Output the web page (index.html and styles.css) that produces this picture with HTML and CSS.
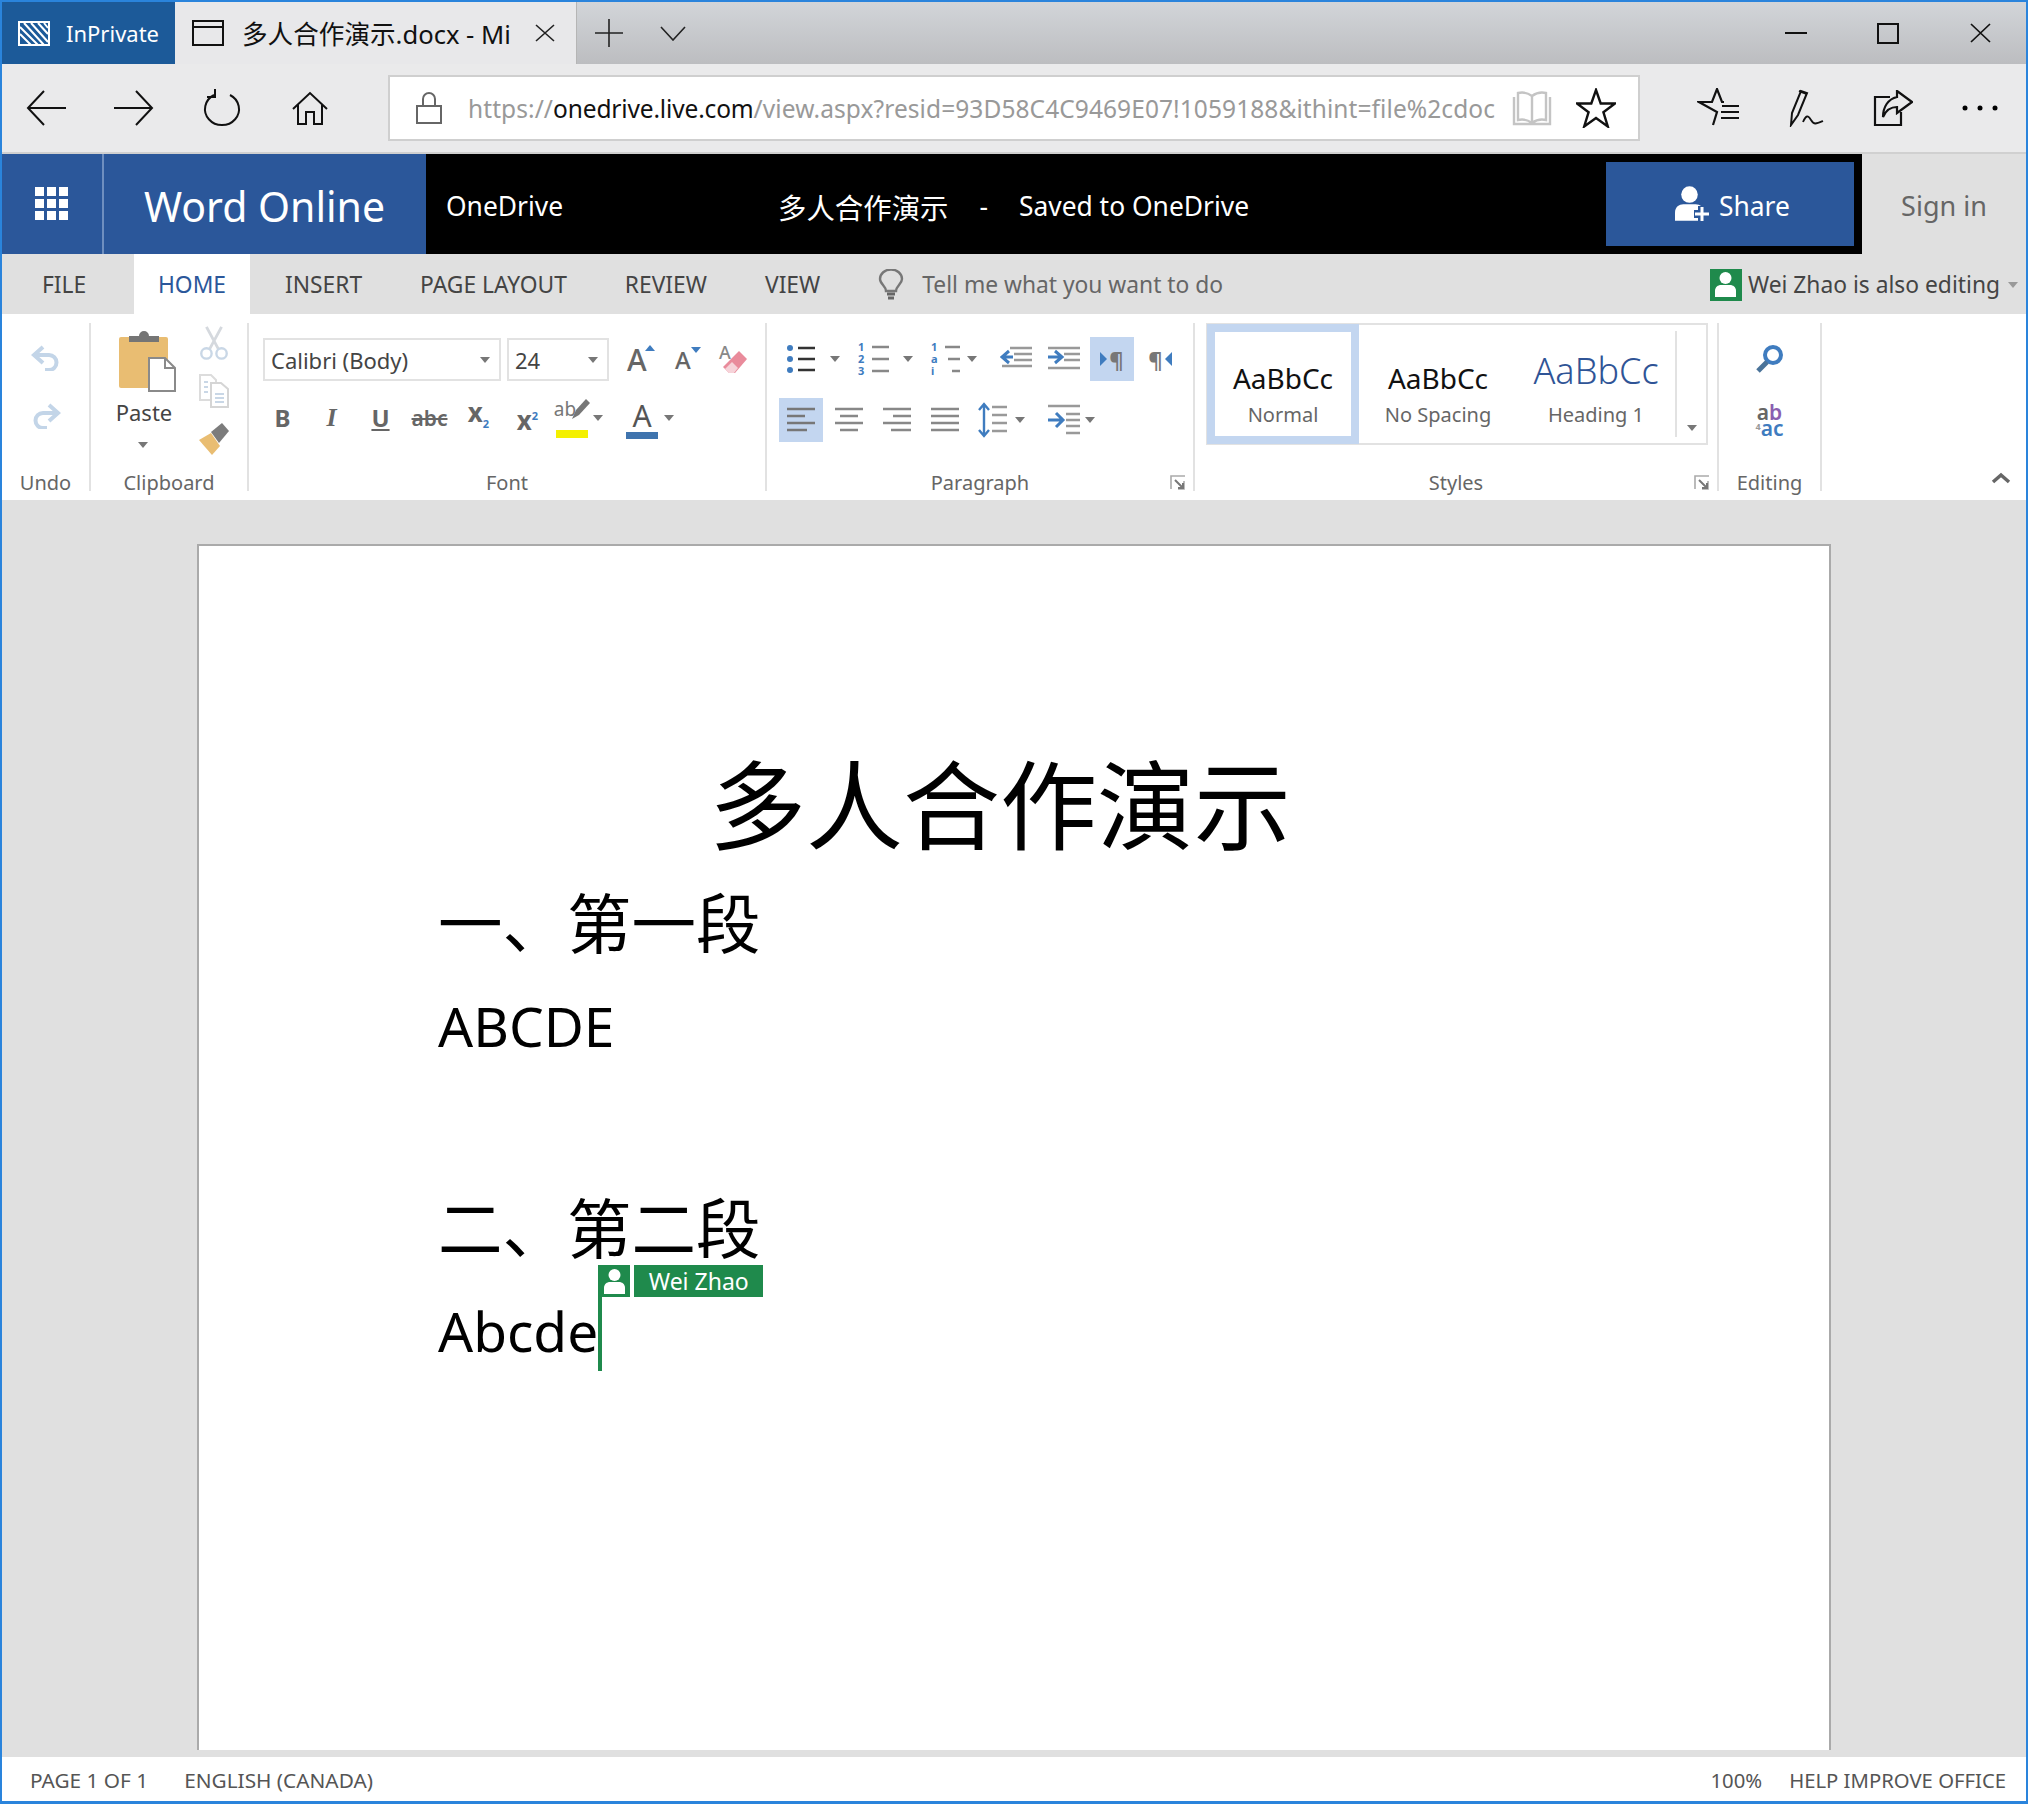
FILE: index.html
```html
<!DOCTYPE html>
<html lang="zh">
<head>
  <meta charset="UTF-8" />
  <title>多人合作演示.docx - Microsoft Word Online</title>
  <link rel="stylesheet" href="styles.css">
</head>
<body>
  <svg class="sprites" width="0" height="0">
    <symbol id="person" viewBox="0 0 21 25">
      <circle cx="10.500" cy="6" r="6" fill="#fff"/>
      <path d="M0 25v-6c0-4 3-6 6-6h9c3 0 6 2 6 6v6z" fill="#fff"/>
    </symbol>
    <symbol id="launcher" viewBox="0 0 16 16">
      <path d="M1 14V1h14M14 6v8H8" fill="none" stroke="#aaa" stroke-width="1.6"/>
      <path d="M5 5l8 8M13 8v5H8" fill="none" stroke="#777" stroke-width="2"/>
    </symbol>
  </svg>

  <div class="window">
    <!-- browser tabs -->
    <div class="tabbar">
      <div class="inprivate">
        <svg width="32" height="25" viewBox="0 0 32 25"><rect x="1" y="1" width="30" height="23" fill="none" stroke="#fff" stroke-width="2"/><path d="M2 6l18 18M2 13l11 11M6 2l20 22M13 2l17 19M20 2l10 11M26 2l4 5" stroke="#fff" stroke-width="2"/></svg>
        <span>InPrivate</span>
      </div>
      <div class="tab">
        <svg width="32" height="26" viewBox="0 0 32 26"><path d="M1 1h30v24H1zM1 7h30" fill="none" stroke="#111" stroke-width="2"/></svg>
        <span class="tab-title">多人合作演示.docx - Mi</span>
        <svg class="tab-close" width="20" height="18" viewBox="0 0 20 18"><path d="M1 1l18 16M19 1L1 17" stroke="#222" stroke-width="1.6"/></svg>
      </div>
      <div class="tab-add"><svg width="28" height="28" viewBox="0 0 28 28"><path d="M14 0v28M0 14h28" stroke="#222" stroke-width="1.6"/></svg></div>
      <div class="tab-more"><svg width="26" height="15" viewBox="0 0 26 15"><path d="M1 1l12 13L25 1" fill="none" stroke="#222" stroke-width="1.6"/></svg></div>
      <div class="win-controls">
        <div class="win-btn"><svg width="22" height="2"><rect width="22" height="2" fill="#111"/></svg></div>
        <div class="win-btn"><svg width="22" height="21" viewBox="0 0 22 21"><rect x="1" y="1" width="20" height="19" fill="none" stroke="#111" stroke-width="2"/></svg></div>
        <div class="win-btn"><svg width="21" height="20" viewBox="0 0 21 20"><path d="M1 1l19 18M20 1L1 19" stroke="#111" stroke-width="1.7"/></svg></div>
      </div>
    </div>

    <!-- browser toolbar -->
    <div class="toolbar">
      <div class="nav-btn"><svg width="40" height="36" viewBox="0 0 40 36"><path d="M18 1L2 18l16 17M2 18h38" fill="none" stroke="#111" stroke-width="2"/></svg></div>
      <div class="nav-btn"><svg width="40" height="36" viewBox="0 0 40 36"><path d="M22 1l16 17-16 17M38 18H0" fill="none" stroke="#111" stroke-width="2"/></svg></div>
      <div class="nav-btn"><svg width="40" height="38" viewBox="0 0 40 38"><path d="M12 6a17 16 0 1 0 16 0M13 0v8H5" fill="none" stroke="#111" stroke-width="2"/></svg></div>
      <div class="nav-btn"><svg width="36" height="34" viewBox="0 0 36 34"><path d="M1 18L18 2l17 16M6 14v19h8V21h8v12h8V14" fill="none" stroke="#111" stroke-width="2"/></svg></div>
      <div class="address">
        <svg class="lock" width="26" height="32" viewBox="0 0 26 32"><path d="M7 14V7a6 6 0 0 1 12 0v7" fill="none" stroke="#666" stroke-width="2"/><rect x="1" y="14" width="24" height="17" fill="none" stroke="#666" stroke-width="2"/></svg>
        <div class="url"><span class="url-dim">https://</span><span class="url-host">onedrive.live.com</span><span class="url-dim">/view.aspx?resid=93D58C4C9469E07!1059188&amp;ithint=file%2cdocx</span></div>
        <svg class="reader" width="40" height="36" viewBox="0 0 40 36"><path d="M20 6C16 3 10 2 6 3v27c4-1 10 0 14 3 4-3 10-4 14-3V3c-4-1-10 0-14 3zM20 6v27M2 7v27h36V7" fill="none" stroke="#c4c4c4" stroke-width="2.4"/></svg>
        <svg class="star" width="40" height="40" viewBox="0 0 40 40"><path d="M20 2l4.700 13.500H39l-11.600 8.700 4.400 14.300L20 30l-11.800 8.500 4.400-14.300L1 15.500h14.300z" fill="none" stroke="#111" stroke-width="2.400"/></svg>
      </div>
      <div class="hub">
        <div class="hub-btn"><svg width="44" height="40" viewBox="0 0 44 40"><path d="M16 37l4-13L2 14h13l5-13 5 13h2M20 24l-4 13" fill="none" stroke="#111" stroke-width="2.200"/><path d="M25 18h17M24 24h18M24 30h18" stroke="#111" stroke-width="2.200"/></svg></div>
        <div class="hub-btn"><svg width="36" height="38" viewBox="0 0 36 38"><path d="M3 36l1-12L13 2l6 2-9 22z M11 2l8 3" fill="none" stroke="#111" stroke-width="2"/><path d="M15 33c3-7 5-7 8-2s5 4 12 1" fill="none" stroke="#111" stroke-width="1.800"/></svg></div>
        <div class="hub-btn"><svg width="40" height="36" viewBox="0 0 40 36"><path d="M17 7H2v28h26V22" fill="none" stroke="#111" stroke-width="2.200"/><path d="M24 1l15 11-15 11v-6c-7 0-11 3-14 10 0-10 5-18 14-20z" fill="none" stroke="#111" stroke-width="2.200"/></svg></div>
        <div class="hub-btn"><svg width="36" height="6" viewBox="0 0 36 6"><circle cx="3" cy="3" r="2.500"/><circle cx="18" cy="3" r="2.500"/><circle cx="33" cy="3" r="2.500"/></svg></div>
      </div>
    </div>

    <!-- word header -->
    <div class="appbar">
      <div class="waffle">
        <svg width="34" height="34" viewBox="0 0 34 34" fill="#fff"><rect width="9" height="9"/><rect x="12" width="9" height="9"/><rect x="24" width="9" height="9"/><rect y="12" width="9" height="9"/><rect x="12" y="12" width="9" height="9"/><rect x="24" y="12" width="9" height="9"/><rect y="24" width="9" height="9"/><rect x="12" y="24" width="9" height="9"/><rect x="24" y="24" width="9" height="9"/></svg>
      </div>
      <div class="brand">Word Online</div>
      <div class="appbar-main">
        <span class="crumb">OneDrive</span>
        <span class="doc-name">多人合作演示</span>
        <span class="doc-dash">-</span>
        <span class="doc-state">Saved to OneDrive</span>
        <div class="share">
          <svg width="36" height="37" viewBox="0 0 36 37"><use href="#person" width="29" height="35"/><path d="M27 20v16M19 28h16" stroke="#2b579a" stroke-width="8"/><path d="M27 21v14M20 28h14" stroke="#fff" stroke-width="3"/></svg>
          <span>Share</span>
        </div>
      </div>
      <div class="signin">Sign in</div>
    </div>

    <!-- ribbon tabs -->
    <div class="ribbon-tabs">
      <div class="rtab rtab-file">FILE</div>
      <div class="rtab rtab-active">HOME</div>
      <div class="rtab">INSERT</div>
      <div class="rtab">PAGE LAYOUT</div>
      <div class="rtab">REVIEW</div>
      <div class="rtab">VIEW</div>
      <div class="tell">
        <svg width="26" height="32" viewBox="0 0 26 32"><path d="M8 22c0-5-6-7-6-12a11 9.500 0 0 1 22 0c0 5-6 7-6 12z" fill="none" stroke="#777" stroke-width="2.400"/><path d="M9 25h8M10 29h6" stroke="#666" stroke-width="3"/></svg>
        <span>Tell me what you want to do</span>
      </div>
      <div class="editing-with">
        <div class="avatar"><svg width="21" height="25"><use href="#person" width="21" height="25"/></svg></div>
        <span>Wei Zhao is also editing</span>
        <i class="arr arr-light"></i>
      </div>
    </div>

    <!-- ribbon -->
    <div class="ribbon">
      <div class="group group-undo">
        <div class="undo-body">
          <svg width="30" height="26" viewBox="0 0 30 26"><path d="M12 2L3 10l9 8M3 10h15a7 7 0 0 1 0 15h-4" fill="none" stroke="#c3d5e8" stroke-width="4"/></svg>
          <svg width="30" height="26" viewBox="0 0 30 26"><path d="M18 2l9 8-9 8M27 10H12a7 7 0 0 0 0 15h4" fill="none" stroke="#c3d5e8" stroke-width="4"/></svg>
        </div>
        <div class="group-label">Undo</div>
      </div>

      <div class="group group-clip">
        <div class="clip-body">
          <div class="paste">
            <svg width="58" height="62" viewBox="0 0 58 62"><rect x="0" y="7" width="49" height="51" rx="2" fill="#e9bd72"/><path d="M10 12V6h10a5 5 0 0 1 10 0h10v6z" fill="#757575"/><path d="M30 28h16l10 10v23H30z" fill="#fff" stroke="#8a8a8a" stroke-width="2"/><path d="M46 28v10h10" fill="none" stroke="#8a8a8a" stroke-width="2"/></svg>
            <span class="paste-label">Paste</span>
            <i class="arr"></i>
          </div>
          <div class="clip-tools">
            <svg width="30" height="34" viewBox="0 0 30 36"><path d="M7 1l13 24M23 1L10 25" stroke="#d5d9de" stroke-width="3"/><circle cx="7" cy="29" r="5.500" fill="none" stroke="#c9d7e6" stroke-width="2.500"/><circle cx="23" cy="29" r="5.500" fill="none" stroke="#c9d7e6" stroke-width="2.500"/></svg>
            <svg width="30" height="34" viewBox="0 0 30 34"><path d="M1 1h11l5 5v20H1z" fill="#fff" stroke="#dcdcdc" stroke-width="2"/><path d="M12 9h10l7 6v18H12z" fill="#fff" stroke="#d5d5d5" stroke-width="2"/><path d="M16 20h9M16 24h9M16 28h9M5 8h4M5 13h4M5 18h4" stroke="#c9d7e6" stroke-width="2"/></svg>
            <svg width="32" height="34" viewBox="0 0 32 34"><path d="M1 18l12-7 9 13-8 9z" fill="#e9bd72"/><path d="M13 10L24 1l7 8-10 12z" fill="#7c7c7c"/></svg>
          </div>
        </div>
        <div class="group-label">Clipboard</div>
      </div>

      <div class="group group-font">
        <div class="font-body">
          <div class="row">
            <div class="select select-font"><span>Calibri (Body)</span><i class="arr"></i></div>
            <div class="select select-size"><span>24</span><i class="arr"></i></div>
            <div class="size-tools">
              <span class="grow">A<i class="tri-up"></i></span>
              <span class="shrink">A<i class="tri-down"></i></span>
              <span class="eraser">
                <svg width="30" height="30" viewBox="0 0 30 30"><path d="M10 28l-6-6L20 6l8 8-12 14z" fill="#e98b9b"/><path d="M6 24l7-7 6 6-4 5h-5z" fill="#f6d3d9"/></svg>
                <span class="eraser-a">A</span>
              </span>
            </div>
          </div>
          <div class="row row-fmt">
            <b class="fmt">B</b>
            <i class="fmt fmt-i">I</i>
            <u class="fmt fmt-u">U</u>
            <span class="fmt fmt-s">abc</span>
            <span class="fmt fmt-x">x<sub>2</sub></span>
            <span class="fmt fmt-x">x<sup>2</sup></span>
            <span class="hilite"><span class="hilite-txt">ab</span><svg width="20" height="22" viewBox="0 0 20 22"><path d="M2 21l4-9L16 1l4 4L9 17z" fill="#777"/></svg></span>
            <i class="arr arr-hilite"></i>
            <span class="color">A</span>
            <i class="arr"></i>
          </div>
        </div>
        <div class="group-label">Font</div>
      </div>

      <div class="group group-para">
        <div class="para-body">
          <div class="row para-row1">
            <svg class="p-wide" width="30" height="30" viewBox="0 0 30 30"><circle cx="3" cy="4" r="3" fill="#3f7cbf"/><circle cx="3" cy="15" r="3" fill="#3f7cbf"/><circle cx="3" cy="26" r="3" fill="#3f7cbf"/><path d="M11 4h17M11 15h17M11 26h17" stroke="#333" stroke-width="2.500"/></svg>
            <i class="arr arr-p"></i>
            <span class="p-list"><span class="p-num">1<br>2<br>3</span><svg width="18" height="32" viewBox="0 0 18 32"><path d="M0 4h17M0 16h17M0 28h17" stroke="#888" stroke-width="2.500"/></svg></span>
            <i class="arr arr-p"></i>
            <span class="p-list p-multi"><span class="p-num">1<br>a<br>i</span><svg width="16" height="32" viewBox="0 0 16 32"><path d="M0 4h15M3 16h12M7 28h8" stroke="#888" stroke-width="2.500"/></svg></span>
            <i class="arr arr-p2"></i>
            <svg class="p-cell" width="32" height="26" viewBox="0 0 32 26"><path d="M10 2h22M14 8h18M14 14h18M2 20h30" stroke="#999" stroke-width="2.400"/><path d="M9 5l-7 6 7 6M2 11h11" fill="none" stroke="#3f7cbf" stroke-width="3"/></svg>
            <svg class="p-cell" width="32" height="26" viewBox="0 0 32 26"><path d="M0 2h32M16 8h16M16 14h16M0 22h32" stroke="#999" stroke-width="2.400"/><path d="M7 5l7 6-7 6M0 11h13" fill="none" stroke="#3f7cbf" stroke-width="3"/></svg>
            <span class="p-cell p-on"><i class="tri-r"></i><span class="pilcrow">¶</span></span>
            <span class="p-cell"><span class="pilcrow">¶</span><i class="tri-l"></i></span>
          </div>
          <div class="row para-row2">
            <span class="p-cell p-on"><svg width="30" height="28" viewBox="0 0 30 28"><path d="M1 3h28M1 10h18M1 17h28M1 24h20" stroke="#777" stroke-width="2.600"/></svg></span>
            <span class="p-cell"><svg width="30" height="28" viewBox="0 0 30 28"><path d="M1 3h28M6 10h18M1 17h28M6 24h18" stroke="#888" stroke-width="2.600"/></svg></span>
            <span class="p-cell"><svg width="30" height="28" viewBox="0 0 30 28"><path d="M1 3h28M11 10h18M1 17h28M9 24h20" stroke="#888" stroke-width="2.600"/></svg></span>
            <span class="p-cell"><svg width="30" height="28" viewBox="0 0 30 28"><path d="M1 3h28M1 10h28M1 17h28M1 24h28" stroke="#888" stroke-width="2.600"/></svg></span>
            <span class="p-cell"><svg width="30" height="36" viewBox="0 0 30 36"><path d="M14 5h15M14 13h15M14 21h15M14 29h15" stroke="#999" stroke-width="2.600"/><path d="M1 8l5-6 5 6M6 2v32M1 28l5 6 5-6" fill="none" stroke="#3f7cbf" stroke-width="2.400"/></svg></span>
            <i class="arr arr-p3"></i>
            <svg class="p-cell2" width="32" height="32" viewBox="0 0 32 32"><path d="M0 2h32M18 10h14M18 16h14M18 22h14M18 29h14" stroke="#999" stroke-width="2.400"/><path d="M8 9l7 7-7 7M0 16h13" fill="none" stroke="#3f7cbf" stroke-width="3"/></svg>
            <i class="arr"></i>
          </div>
        </div>
        <div class="group-label">Paragraph</div>
        <svg class="launch" width="16" height="16"><use href="#launcher"/></svg>
      </div>

      <div class="group group-styles">
        <div class="gallery">
          <div class="style style-on"><div class="style-inner"><span class="style-sample">AaBbCc</span><span class="style-name">Normal</span></div></div>
          <div class="style style-plain"><span class="style-sample">AaBbCc</span><span class="style-name">No Spacing</span></div>
          <div class="style style-head"><span class="style-sample style-h1">AaBbCc</span><span class="style-name">Heading 1</span></div>
          <div class="gallery-more"><i class="arr"></i></div>
        </div>
        <div class="group-label">Styles</div>
        <svg class="launch" width="16" height="16"><use href="#launcher"/></svg>
      </div>

      <div class="group group-edit">
        <div class="edit-body">
          <svg width="30" height="30" viewBox="0 0 30 30"><circle cx="18" cy="11" r="8" fill="none" stroke="#3f7cbf" stroke-width="4"/><path d="M12 18L3 27" stroke="#4a7399" stroke-width="5"/></svg>
          <span class="replace"><span class="rep-a">a<em>b</em></span><span class="rep-b"><small>⁴</small>ac</span></span>
        </div>
        <div class="group-label">Editing</div>
      </div>

      <svg class="collapse" width="20" height="12" viewBox="0 0 20 12"><path d="M2 10l8-7 8 7" fill="none" stroke="#666" stroke-width="3.500"/></svg>
    </div>

    <!-- document -->
    <div class="canvas">
      <div class="page">
        <h1 class="doc-title">多人合作演示</h1>
        <p class="doc-head">一、第一段</p>
        <p class="doc-text">ABCDE</p>
        <p class="doc-gap"></p>
        <p class="doc-head">二、第二段</p>
        <p class="doc-text">Abcde<span class="caret"><span class="flag"><span class="flag-avatar"><svg width="21" height="25"><use href="#person" width="21" height="25"/></svg></span><span class="flag-name">Wei Zhao</span></span></span></p>
      </div>
    </div>

    <!-- status bar -->
    <div class="status">
      <span class="st-page">PAGE 1 OF 1</span>
      <span class="st-lang">ENGLISH (CANADA)</span>
      <span class="st-zoom">100%</span>
      <span class="st-help">HELP IMPROVE OFFICE</span>
    </div>
  </div>
</body>
</html>
```

FILE: styles.css
```css
* {
  box-sizing: border-box;
}

html, body {
  margin: 0;
  padding: 0;
}

body {
  font-family: "Noto Sans", "Noto Sans CJK SC", sans-serif;
  color: #444;
}

.sprites {
  position: absolute;
}

.window {
  width: 2028px;
  height: 1804px;
  border: 2px solid #2a84dc;
  border-bottom-width: 3px;
  display: flex;
  flex-direction: column;
  overflow: hidden;
  background: #e0e0e0;
}

svg {
  display: block;
  flex: none;
}

/* small dropdown arrow */
.arr {
  display: block;
  flex: none;
  width: 0;
  height: 0;
  border-left: 5px solid transparent;
  border-right: 5px solid transparent;
  border-top: 6px solid #777;
}

.arr-light {
  border-top-color: #999;
  margin-left: 8px;
}

/* browser tabs */
.tabbar {
  height: 62px;
  display: flex;
  align-items: stretch;
  background: linear-gradient(#d2d5d9, #bcbdc0);
}

.inprivate {
  width: 173px;
  background: #1c5a99;
  color: #fff;
  font-size: 22px;
  display: flex;
  align-items: center;
  padding-left: 16px;
  gap: 16px;
}

.tab {
  width: 402px;
  background: #e8e8ea;
  color: #111;
  display: flex;
  align-items: center;
  padding-left: 17px;
  border-right: 1px solid #b5b5b5;
}

.tab-title {
  font-size: 25.6px;
  margin-left: 18px;
  white-space: nowrap;
  width: 276px;
}

.tab-close {
  margin-left: 17px;
}

.tab-add {
  width: 64px;
  display: flex;
  align-items: center;
  justify-content: center;
}

.tab-more {
  width: 64px;
  display: flex;
  align-items: center;
  justify-content: center;
}

.win-controls {
  margin-left: auto;
  display: flex;
}

.win-btn {
  width: 92px;
  display: flex;
  align-items: center;
  justify-content: center;
}

/* browser toolbar */
.toolbar {
  height: 90px;
  background: #eaeaeb;
  border-bottom: 2px solid #d0d0d0;
  display: flex;
  align-items: center;
}

.nav-btn {
  width: 88px;
  display: flex;
  justify-content: center;
}

.address {
  width: 1252px;
  height: 66px;
  margin-left: 34px;
  background: #fff;
  border: 2px solid #cfcfcf;
  display: flex;
  align-items: center;
  padding-left: 26px;
}

.url {
  width: 1027px;
  margin-left: 26px;
  font-size: 24.5px;
  white-space: nowrap;
  overflow: hidden;
  letter-spacing: -0.15px;
}

.url-dim {
  color: #999;
  letter-spacing: 0.08px;
}

.url-host {
  color: #111;
}

.reader {
  margin-left: 17px;
}

.star {
  margin-left: 24px;
}

.hub {
  display: flex;
  margin-left: 35px;
}

.hub-btn {
  width: 87px;
  display: flex;
  justify-content: center;
  align-items: center;
}

/* word header */
.appbar {
  height: 100px;
  display: flex;
  background: #e0e0e0;
}

.waffle {
  width: 102px;
  background: #2b579a;
  border-right: 2px solid #6f8fbf;
  display: flex;
  align-items: center;
  justify-content: center;
}

.brand {
  width: 322px;
  background: #2b579a;
  color: #fff;
  font-size: 41px;
  padding-left: 40px;
  line-height: 104px;
  white-space: nowrap;
}

.appbar-main {
  width: 1436px;
  background: #000;
  color: #fff;
  display: flex;
  align-items: center;
  font-size: 26.4px;
  padding-left: 20px;
  padding-right: 8px;
}

.crumb, .doc-name, .doc-dash, .doc-state {
  position: relative;
  top: 2px;
}

.doc-name {
  margin-left: 215px;
  font-size: 28.400px;
}

.doc-dash {
  margin-left: 31px;
}

.doc-state {
  margin-left: 31px;
}

.share {
  margin-left: auto;
  width: 248px;
  height: 84px;
  background: #2b579a;
  display: flex;
  align-items: center;
  padding-left: 69px;
  gap: 8px;
}

.share span {
  position: relative;
  top: 2px;
}

.signin {
  flex: 1;
  color: #666;
  font-size: 27px;
  text-align: center;
  line-height: 104px;
  white-space: nowrap;
}

/* ribbon tabs */
.ribbon-tabs {
  height: 60px;
  background: #e0e0e0;
  display: flex;
  align-items: stretch;
  font-size: 22.800px;
  color: #444;
}

.rtab {
  padding: 0 29px;
  line-height: 62px;
  white-space: nowrap;
}

.rtab-file {
  width: 132px;
  padding: 0 0 0 40px;
}

.rtab-active {
  width: 116px;
  padding: 0;
  text-align: center;
  background: #fff;
  color: #2b579a;
  margin-right: 6px;
}

.tell {
  display: flex;
  align-items: center;
  gap: 18px;
  margin-left: 29px;
  color: #666;
  padding-top: 1px;
}

.editing-with {
  margin-left: auto;
  display: flex;
  align-items: center;
  padding-right: 8px;
  padding-top: 1px;
}

.avatar {
  width: 32px;
  height: 32px;
  background: #1f8a4c;
  display: flex;
  align-items: center;
  justify-content: center;
  margin-right: 6px;
}

/* ribbon */
.ribbon {
  height: 186px;
  background: #fff;
  display: flex;
  padding-top: 9px;
  position: relative;
}

.group {
  height: 168px;
  border-right: 2px solid #e2e2e2;
  display: flex;
  flex-direction: column;
  position: relative;
}

.group-label {
  height: 14px;
  line-height: 14px;
  margin-top: auto;
  text-align: center;
  font-size: 20px;
  color: #666;
  white-space: nowrap;
  position: relative;
  top: -1px;
}

.launch {
  position: absolute;
  right: 7px;
  bottom: 0;
}

.group-undo {
  width: 89px;
}

.undo-body {
  display: flex;
  flex-direction: column;
  align-items: center;
  gap: 32px;
  padding-top: 22px;
}

.group-clip {
  width: 158px;
}

.clip-body {
  display: flex;
  padding-left: 28px;
}

.paste {
  width: 58px;
  display: flex;
  flex-direction: column;
  align-items: center;
  padding-top: 7px;
}

.paste-label {
  font-size: 22px;
  color: #444;
  margin-top: 5px;
  margin-left: -8px;
  line-height: 30px;
}

.paste .arr {
  margin-top: 15px;
  margin-left: -10px;
}

.clip-tools {
  display: flex;
  flex-direction: column;
  align-items: center;
  gap: 14px;
  margin-left: 21px;
  padding-top: 3px;
}

.group-font {
  width: 518px;
}

.font-body {
  padding: 15px 0 0 14px;
}

.row {
  display: flex;
  align-items: center;
}

.select {
  height: 43px;
  border: 2px solid #e2e2e2;
  display: flex;
  align-items: center;
  justify-content: space-between;
  font-size: 22px;
  color: #444;
  padding: 0 9px 0 6px;
}

.select-font {
  width: 238px;
}

.select-size {
  width: 102px;
  margin-left: 6px;
}

.size-tools {
  display: flex;
  align-items: center;
  margin-left: 17px;
  color: #666;
  font-weight: 500;
}

.grow {
  width: 46px;
  font-size: 30px;
  position: relative;
  line-height: 40px;
  padding-left: 1px;
}

.shrink {
  width: 47px;
  font-size: 24px;
  position: relative;
  padding-left: 3px;
  line-height: 40px;
}

.tri-up, .tri-down {
  position: absolute;
  top: 5px;
  left: 19px;
  width: 0;
  height: 0;
  border-left: 5px solid transparent;
  border-right: 5px solid transparent;
}

.tri-up {
  border-bottom: 6px solid #3f7cbf;
}

.tri-down {
  left: 19px;
  top: 7px;
  border-top: 6px solid #3f7cbf;
}

.eraser {
  position: relative;
  display: block;
  width: 30px;
  height: 30px;
}

.eraser-a {
  position: absolute;
  left: 0;
  top: -5px;
  font-size: 18px;
  line-height: 24px;
  color: #888;
}

.row-fmt {
  margin-top: 15px;
  margin-left: -5px;
  height: 44px;
}

.fmt {
  width: 49px;
  text-align: center;
  font-size: 24px;
  font-style: normal;
  color: #666;
  line-height: 44px;
  flex: none;
}

b.fmt {
  font-weight: 700;
}

.fmt-i {
  font-style: italic;
  font-weight: 700;
  font-size: 26px;
  font-family: "Liberation Serif", serif;
}

.fmt-u {
  font-weight: 700;
}

.fmt-s {
  font-size: 21px;
  text-decoration: line-through;
  font-weight: 600;
}

.fmt-x {
  font-weight: 700;
  font-size: 26px;
}

.fmt-x sub, .fmt-x sup {
  font-size: 11px;
  color: #3f7cbf;
}

.hilite {
  width: 38px;
  height: 44px;
  margin-left: 1px;
  display: flex;
  align-items: flex-start;
  justify-content: center;
  padding-top: 2px;
  position: relative;
  font-size: 19px;
  color: #777;
}

.hilite::after {
  content: "";
  position: absolute;
  left: 3px;
  right: 3px;
  bottom: 2px;
  height: 8px;
  background: #f4f000;
}

.hilite-txt {
  line-height: 22px;
}

.hilite svg {
  margin-left: -6px;
}

.arr-hilite {
  margin-left: 2px;
}

.color {
  width: 32px;
  height: 42px;
  margin-left: 23px;
  margin-right: 6px;
  text-align: center;
  font-size: 30px;
  line-height: 38px;
  color: #555;
  border-bottom: 7px solid #3f74ae;
}

.group-para {
  width: 428px;
}

.para-body {
  padding: 15px 0 0 12px;
}

.para-row1 {
  height: 44px;
  margin-top: -1px;
}

.para-row2 {
  margin-top: 17px;
  height: 44px;
}

.p-wide {
  margin-left: 8px;
}

.arr-p {
  margin-left: 13px;
}

.p-list {
  display: flex;
  align-items: center;
  margin-left: 18px;
}

.p-num {
  font-size: 11px;
  line-height: 12px;
  font-weight: 700;
  color: #3f7cbf;
  width: 14px;
}

.p-multi {
  margin-left: 18px;
}

.arr-p2 {
  margin-left: 6px;
  margin-right: 17px;
}

.p-cell {
  width: 44px;
  height: 44px;
  margin-right: 4px;
  display: flex;
  align-items: center;
  justify-content: center;
  flex: none;
  color: #777;
  padding: 0 6px;
}

.p-on {
  background: #c3d6f0;
}

svg.p-cell {
  width: 32px;
  height: 26px;
  padding: 0;
  margin-left: 6px;
  margin-right: 10px;
}

.pilcrow {
  font-size: 22px;
  font-weight: 700;
  line-height: 44px;
}

.tri-r, .tri-l {
  display: block;
  width: 0;
  height: 0;
  border-top: 7px solid transparent;
  border-bottom: 7px solid transparent;
}

.tri-r {
  border-left: 7px solid #3f7cbf;
  margin-right: 2px;
}

.tri-l {
  border-right: 7px solid #3f7cbf;
  margin-left: 2px;
}

.arr-p3 {
  margin-left: -4px;
  margin-right: 23px;
}

.p-cell2 {
  margin-right: 5px;
}

.group-styles {
  width: 524px;
}

.gallery {
  margin-left: 11px;
  width: 502px;
  height: 122px;
  border: 2px solid #e2e2e2;
  display: flex;
}

.style {
  display: flex;
  flex-direction: column;
  align-items: center;
  flex: none;
}

.style-on {
  width: 152px;
  background: #c3d6f0;
  padding: 8px;
  margin: -1px 0 -1px -1px;
}

.style-inner {
  width: 136px;
  height: 104px;
  background: #fff;
  display: flex;
  flex-direction: column;
  align-items: center;
  padding-top: 27px;
}

.style-plain {
  width: 158px;
  padding-top: 34px;
}

.style-head {
  width: 158px;
  padding-top: 22px;
}

.style-sample {
  font-size: 28px;
  line-height: 38px;
  color: #111;
}

.style-h1 {
  font-size: 36px;
  line-height: 48px;
  color: #2f5496;
  font-weight: 300;
}

.style-name {
  font-size: 20px;
  color: #666;
  line-height: 32px;
  margin-top: 2px;
}

.style-head .style-name {
  margin-top: 4px;
}

.gallery-more {
  flex: 1;
  margin: 6px 0;
  border-left: 2px solid #e2e2e2;
  display: flex;
  align-items: flex-end;
  justify-content: center;
  padding-bottom: 6px;
}

.group-edit {
  width: 103px;
}

.edit-body {
  display: flex;
  flex-direction: column;
  align-items: center;
  padding-top: 21px;
  gap: 30px;
}

.replace {
  display: flex;
  flex-direction: column;
  align-items: center;
  font-size: 21px;
  font-weight: 600;
  line-height: 16px;
  color: #666;
}

.rep-a em {
  font-style: normal;
  color: #8a5fb0;
}

.rep-b {
  color: #3f7cbf;
}

.rep-b small {
  font-size: 14px;
  color: #999;
}

.collapse {
  position: absolute;
  right: 15px;
  top: 158px;
}

/* document */
.canvas {
  height: 1257px;
  background: #e0e0e0;
  padding: 44px 195px 7px;
  flex: none;
}

.page {
  height: 1206px;
  background: #fff;
  border: 2px solid #aaa;
  border-bottom: 0;
  padding: 0 0 0 239px;
  color: #000;
}

.doc-title {
  margin: 190px 0 6px -239px;
  padding-right: 28px;
  font-size: 97px;
  font-weight: 400;
  line-height: 136px;
  text-align: center;
}

.doc-head {
  margin: 0 0 13px;
  font-size: 64.500px;
  line-height: 90px;
}

.doc-text {
  margin: 0;
  font-size: 55px;
  line-height: 90px;
  position: relative;
}

.doc-gap {
  margin: 0;
  height: 112px;
}

.caret {
  position: absolute;
  top: -21px;
  width: 4px;
  height: 106px;
  background: #1f8a4c;
}

.flag {
  position: absolute;
  left: 0;
  top: 0;
  display: flex;
  gap: 4px;
  height: 32px;
  white-space: nowrap;
}

.flag-avatar {
  width: 32px;
  background: #1f8a4c;
  display: flex;
  align-items: center;
  justify-content: center;
}

.flag-name {
  width: 129px;
  background: #1f8a4c;
  color: #fff;
  font-size: 23px;
  line-height: 32px;
  text-align: center;
}

/* status bar */
.status {
  flex: 1;
  background: #fff;
  display: flex;
  align-items: center;
  font-size: 20.800px;
  color: #555;
  padding: 2px 20px 0 28px;
  white-space: nowrap;
}

.st-page {
  margin-right: 36px;
}

.st-zoom {
  margin-left: auto;
  margin-right: 27px;
  font-size: 20.300px;
}

.st-help {
  font-size: 20.300px;
}
```
